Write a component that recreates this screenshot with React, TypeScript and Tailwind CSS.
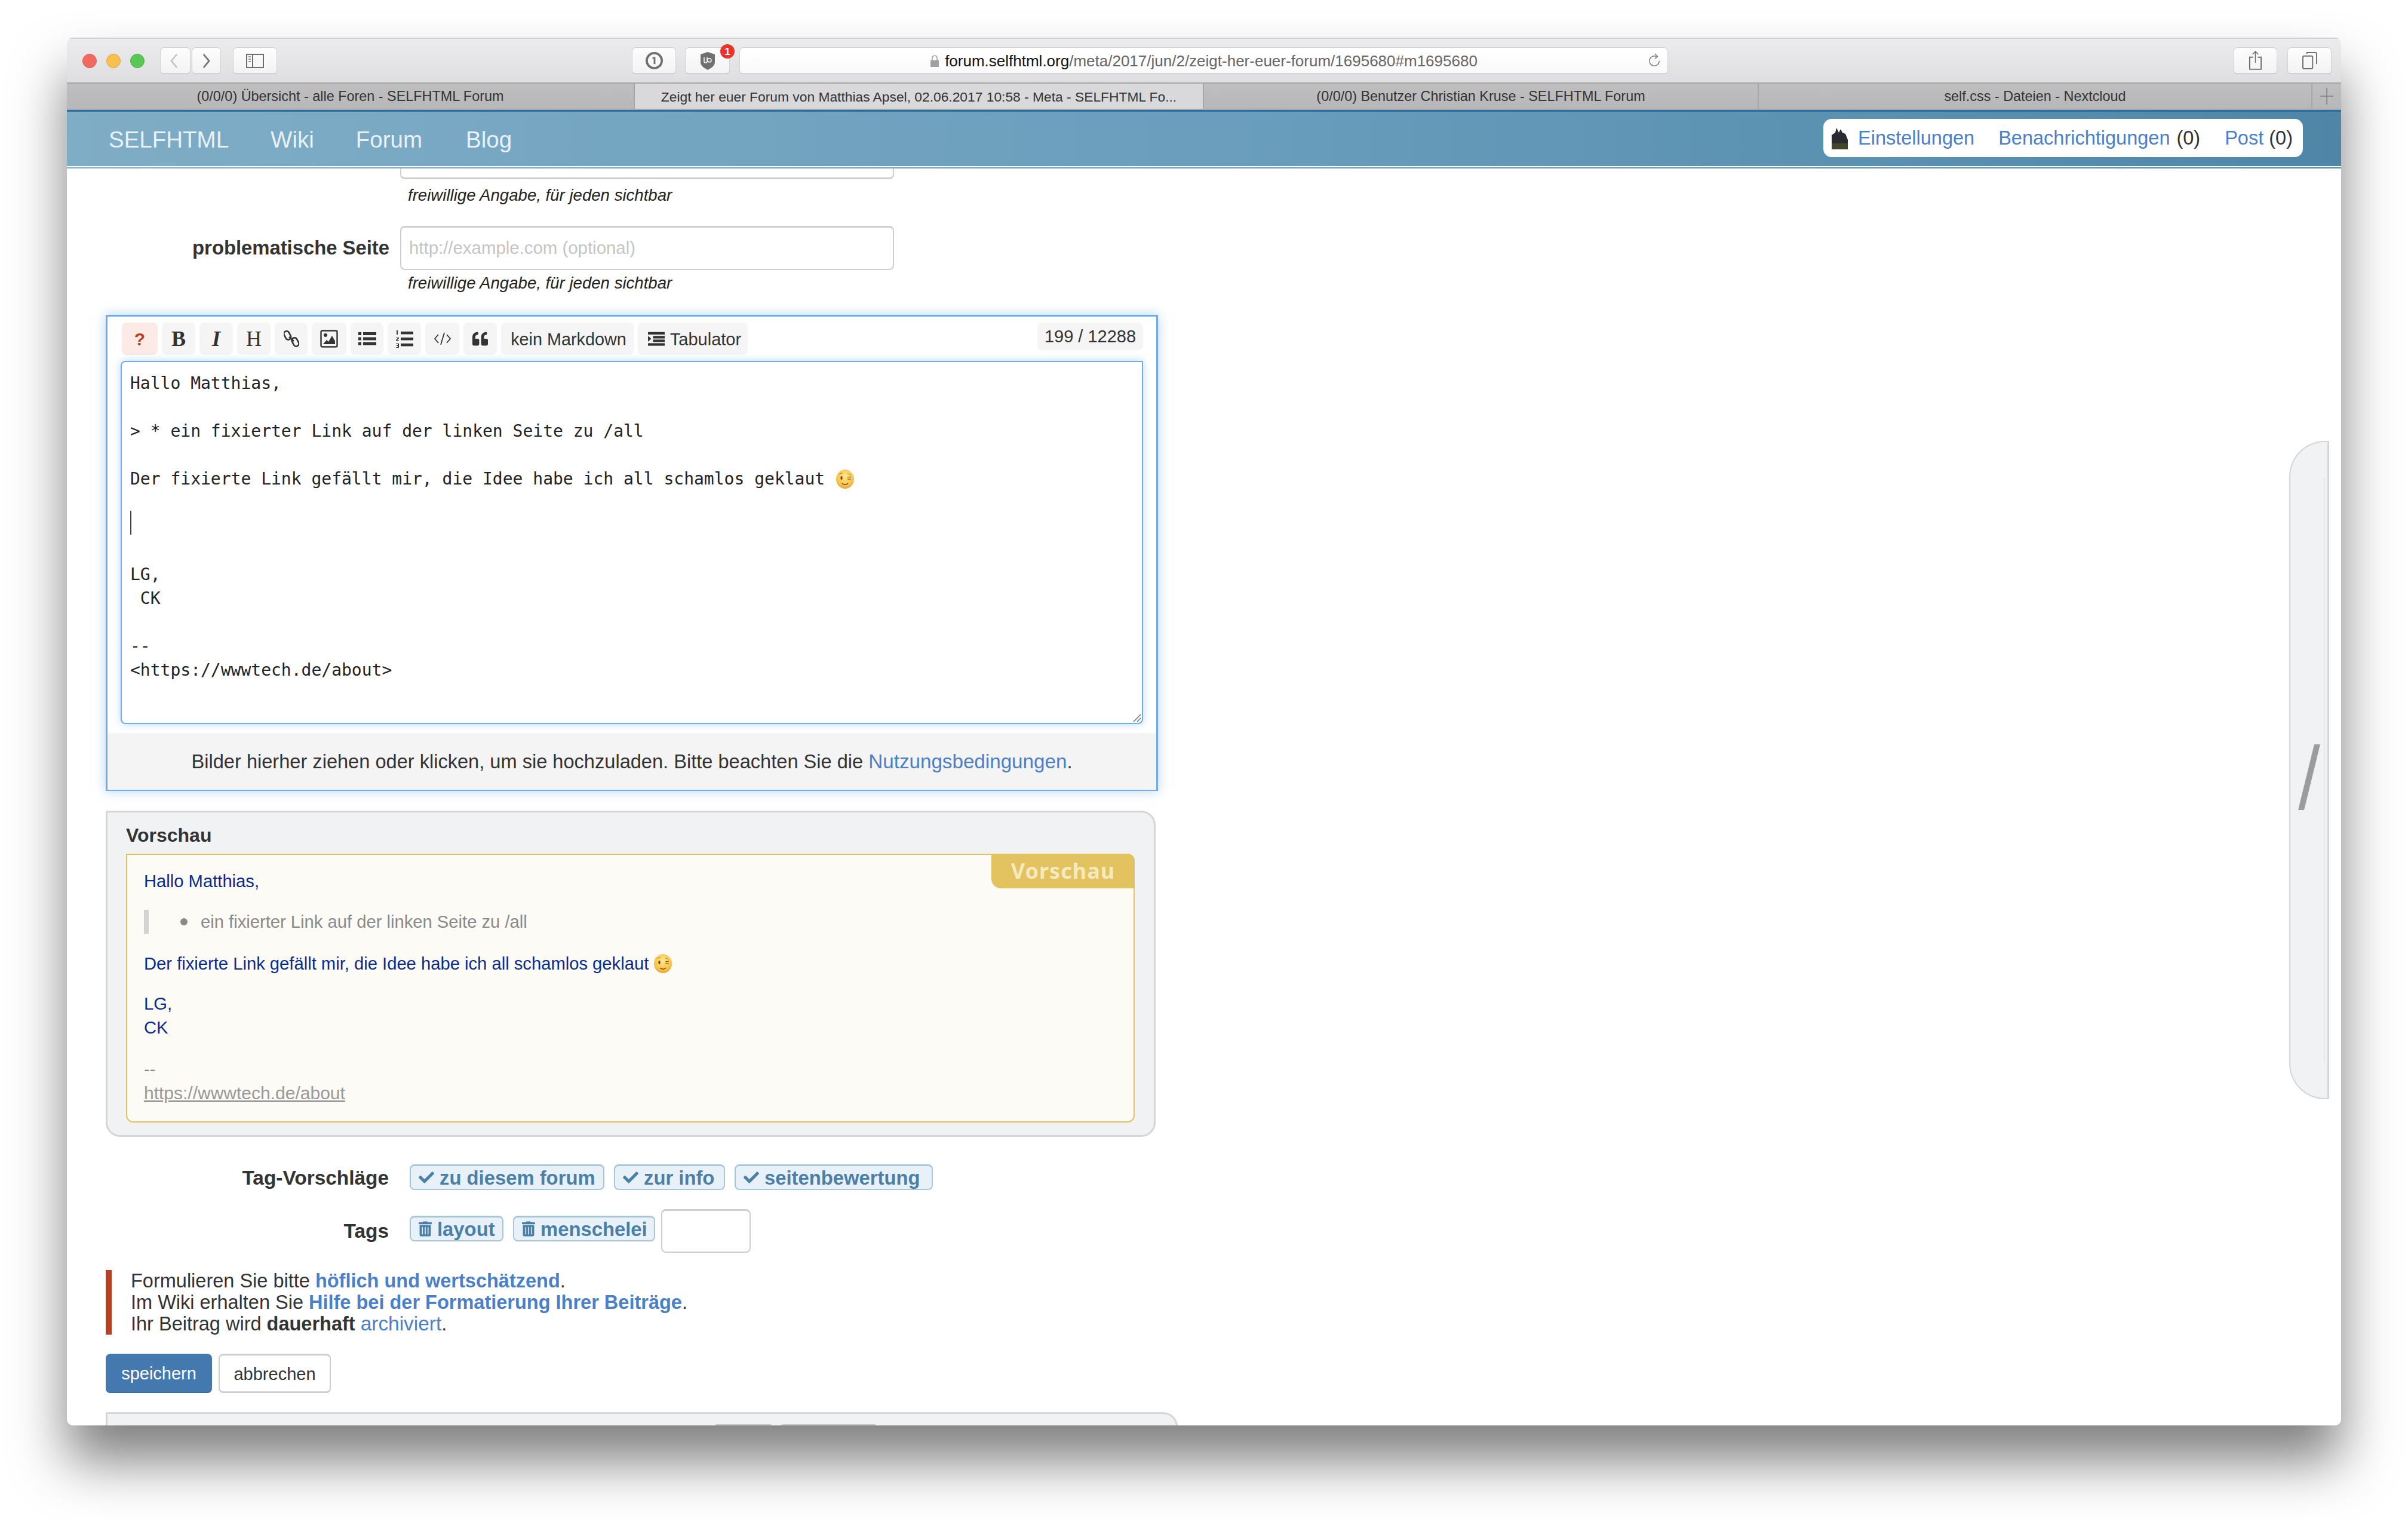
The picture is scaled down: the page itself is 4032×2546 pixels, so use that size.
import { FaCheck, FaQuoteLeft, FaTrashAlt } from "react-icons/fa";

const tabs = [
  { title: "(0/0/0) Übersicht - alle Foren - SELFHTML Forum", width: "w-[951px]", active: false },
  { title: "Zeigt her euer Forum von Matthias Apsel, 02.06.2017 10:58 - Meta - SELFHTML Fo...", width: "w-[953px]", active: true },
  { title: "(0/0/0) Benutzer Christian Kruse - SELFHTML Forum", width: "w-[929px]", active: false },
  { title: "self.css - Dateien - Nextcloud", width: "w-[927px]", active: false },
];

const editorLines = [
  "Hallo Matthias,",
  "",
  "> * ein fixierter Link auf der linken Seite zu /all",
  "",
  "Der fixierte Link gefällt mir, die Idee habe ich all schamlos geklaut",
  "",
  "|",
  "",
  "LG,",
  " CK",
  "",
  "-- ",
  "<https://wwwtech.de/about>",
];

const Wink = ({ className }: { className: string }) => (
  <svg viewBox="0 0 32 32" className={className}>
    <defs>
      <radialGradient id="face" cx="50%" cy="35%" r="70%">
        <stop offset="0%" stopColor="#ffe88a" />
        <stop offset="70%" stopColor="#f9c14a" />
        <stop offset="100%" stopColor="#e39a2a" />
      </radialGradient>
    </defs>
    <ellipse cx="16" cy="16" rx="15" ry="16" fill="url(#face)" />
    <ellipse cx="10" cy="14" rx="1.6" ry="3" fill="#6b4216" />
    <path d="M20 13l6-1M20 16l6 0" stroke="#6b4216" strokeWidth="1.2" fill="none" />
    <path d="M6 8c2-2 4-2 6-2M20 7c2 0 4 1 5 2" stroke="#b8762a" strokeWidth="1" fill="none" />
    <path d="M11 23c3 3 7 3 10 0" stroke="#6b4216" strokeWidth="1.4" fill="none" />
  </svg>
);

const SafariButton = ({ className, children }: { className: string; children?: React.ReactNode }) => (
  <div className={`flex items-center justify-center h-[45px] bg-gradient-to-b from-[#fdfdfd] to-[#f3f3f3] border border-[#d2d2d2] border-b-[#b4b4b4] rounded-[7px] ${className}`}>
    {children}
  </div>
);

const ToolButton = ({ className, children }: { className: string; children: React.ReactNode }) => (
  <div className={`flex items-center justify-center h-[54px] bg-[#f5f5f5] rounded-[8px] text-[#333] ${className}`}>{children}</div>
);

const Tag = ({ width, icon, label }: { width: string; icon: React.ReactNode; label: string }) => (
  <span className={`inline-flex items-center gap-[9px] h-[43px] pl-[13px] bg-[#e8f1f7] border-2 border-t-[3px] border-[#a8c6da] rounded-[8px] text-[#4a80a8] font-bold text-[32.8px] leading-none whitespace-nowrap ${width}`}>
    {icon}
    <span className="pt-[2px]">{label}</span>
  </span>
);

export default function App() {
  return (
    <div className="w-[4032px] h-[2546px] bg-white pt-[63px] pl-[112px] font-['Liberation_Sans',Arial,sans-serif] text-[#333]">
      <div className="flex flex-col w-[3808px] h-[2323px] overflow-hidden bg-white rounded-[10px] shadow-[0_60px_90px_rgba(0,0,0,0.5)]">
        {/* Browser toolbar */}
        <div className="flex items-center shrink-0 h-[75px] pl-[26px] pr-[16px] bg-gradient-to-b from-[#ececee] to-[#dedee1] border-t-2 border-[#cfcfcf]">
          <div className="flex gap-[16px]">
            <span className="w-[24px] h-[24px] rounded-full bg-[#f2695f] border border-[#dd5b50]" />
            <span className="w-[24px] h-[24px] rounded-full bg-[#f8c04e] border border-[#dea83c]" />
            <span className="w-[24px] h-[24px] rounded-full bg-[#5ac854] border border-[#4cae47]" />
          </div>
          <SafariButton className="w-[51px] ml-[26px]">
            <svg viewBox="0 0 16 28" className="w-[15px] h-[26px] mr-[4px]"><path d="M13 2L3 14l10 12" stroke="#c8c8c8" strokeWidth="3" fill="none" /></svg>
          </SafariButton>
          <SafariButton className="w-[49px] ml-[2px]">
            <svg viewBox="0 0 16 28" className="w-[15px] h-[26px]"><path d="M3 2l10 12L3 26" stroke="#777" strokeWidth="3" fill="none" /></svg>
          </SafariButton>
          <SafariButton className="w-[74px] ml-[20px]">
            <svg viewBox="0 0 30 24" className="w-[30px] h-[24px]">
              <rect x="1" y="1" width="28" height="22" fill="none" stroke="#6f6f6f" strokeWidth="2" />
              <path d="M11 1v22" stroke="#6f6f6f" strokeWidth="2" />
              <path d="M4 5h4M4 9h4M4 13h4" stroke="#9a9a9a" strokeWidth="2" />
            </svg>
          </SafariButton>
          <SafariButton className="w-[74px] ml-[594px]">
            <svg viewBox="0 0 32 32" className="w-[31px] h-[31px]">
              <circle cx="16" cy="16" r="13" fill="none" stroke="#707070" strokeWidth="4" />
              <path d="M13 10h5v12h-3V13h-2z" fill="#707070" />
            </svg>
          </SafariButton>
          <div className="relative ml-[15px]">
            <SafariButton className="w-[75px]">
              <svg viewBox="0 0 28 32" className="w-[28px] h-[32px]">
                <path d="M14 1l12 4v13c0 6-6 10-12 13C8 28 2 24 2 18V5z" fill="#707070" />
                <path d="M8 10v7c0 3 5 3 5 0v-7M14 14c0-3 6-3 6 1s-6 4-6 0" stroke="#fff" strokeWidth="1.5" fill="none" />
              </svg>
            </SafariButton>
            <span className="absolute -top-[5px] right-[-8px] flex items-center justify-center w-[24px] h-[24px] rounded-full bg-[#e8352b] text-white text-[17px] font-bold leading-none">1</span>
          </div>
          <div className="relative flex items-center justify-center w-[1555px] h-[45px] ml-[16px] bg-gradient-to-b from-[#ffffff] to-[#fafafa] border border-[#d2d2d2] border-b-[#b4b4b4] rounded-[7px] text-[26px]">
            <svg viewBox="0 0 16 22" className="w-[16px] h-[22px] mr-[9px]">
              <path d="M4 10V6c0-5 8-5 8 0v4" stroke="#a0a0a0" strokeWidth="1.6" fill="none" />
              <rect x="1" y="10" width="14" height="11" fill="#a0a0a0" />
            </svg>
            <span className="pt-[2px] text-[#111]">forum.selfhtml.org</span>
            <span className="pt-[2px] text-[#666]">/meta/2017/jun/2/zeigt-her-euer-forum/1695680#m1695680</span>
            <svg viewBox="0 0 24 26" className="absolute right-[11px] top-[9px] w-[22px] h-[24px]">
              <path d="M16 6A9 9 0 1 0 21 14" stroke="#777" strokeWidth="1.6" fill="none" />
              <path d="M13 1l5 5-5 4" stroke="#777" strokeWidth="1.6" fill="none" />
            </svg>
          </div>
          <SafariButton className="w-[73px] ml-[947px]">
            <svg viewBox="0 0 24 34" className="w-[23px] h-[33px]">
              <path d="M12 1v20M7 6l5-5 5 5" stroke="#6f6f6f" strokeWidth="1.6" fill="none" />
              <path d="M8 11H2v21h20V11h-6" stroke="#6f6f6f" strokeWidth="2" fill="none" />
            </svg>
          </SafariButton>
          <SafariButton className="w-[74px] ml-[17px]">
            <svg viewBox="0 0 26 30" className="w-[25px] h-[29px]">
              <rect x="1" y="7" width="17" height="22" rx="2" fill="none" stroke="#6f6f6f" strokeWidth="2" />
              <path d="M8 3V1h15c1 0 2 1 2 2v18" stroke="#6f6f6f" strokeWidth="2" fill="none" />
            </svg>
          </SafariButton>
        </div>

        {/* Tab bar */}
        <div className="flex shrink-0 h-[46px] border-t-2 border-b-2 border-[#a7a7a8] bg-gradient-to-b from-[#bfbfc0] to-[#b7b7b9]">
          {tabs.map((tab) => (
            <div
              key={tab.title}
              className={`flex items-center justify-center pt-[2px] border-r-2 border-[#a7a7a8] text-[#333] ${tab.width} ${tab.active ? "bg-[#d9d9db] text-[22.8px]" : "text-[23.4px]"}`}
            >
              {tab.title}
            </div>
          ))}
          <div className="flex flex-1 items-center justify-center">
            <svg viewBox="0 0 24 30" className="w-[24px] h-[30px]"><path d="M12 1v28M1 15h22" stroke="#7f7f7f" strokeWidth="1.5" /></svg>
          </div>
        </div>

        {/* Site nav */}
        <div className="shrink-0 border-t-[3px] border-[#2e6da0] h-[98px] bg-gradient-to-r from-[#7fadc6] via-[#6a9ebc] to-[#4f86a8]">
          <div className="flex items-center h-[91px] pl-[70px] pr-[64px] text-[38.5px] text-[#e8f1f6]">
            <span className="mt-[3px]">SELFHTML</span>
            <span className="ml-[70px] mt-[3px]">Wiki</span>
            <span className="ml-[70px] mt-[3px]">Forum</span>
            <span className="ml-[73px] mt-[3px]">Blog</span>
            <div className="flex items-center ml-auto mb-[3px] w-[803px] h-[64px] pl-[14px] bg-white rounded-[14px] text-[32.5px] text-[#333]">
              <svg viewBox="0 0 27 38" className="w-[27px] h-[38px]">
                <path d="M0 38V14L6 10 8 2l4 8 3-6 3 6 5 2 4 10v16z" fill="#2a2a33" />
                <rect x="0" y="28" width="27" height="10" fill="#46442f" />
              </svg>
              <span className="ml-[17px] text-[#4a80c8]">Einstellungen</span>
              <span className="ml-[40px] text-[#4a80c8]">Benachrichtigungen</span>
              <span className="ml-[11px]">(0)</span>
              <span className="ml-[41px] text-[#4a80c8]">Post</span>
              <span className="ml-[9px]">(0)</span>
            </div>
          </div>
          <div className="h-[2px] bg-white" />
        </div>

        {/* Page */}
        <div className="relative flex-1 min-h-0 overflow-hidden pl-[65px]">
          <div className="ml-[493px] w-[827px] h-[18px] border-2 border-t-0 border-b-[3px] border-[#cdcdcd] rounded-b-[8px]" />
          <p className="ml-[506px] mt-[9px] text-[27.6px] leading-[36px] italic text-[#222]">freiwillige Angabe, für jeden sichtbar</p>

          <div className="flex items-center mt-[33px]">
            <label className="w-[493px] pr-[18px] text-right text-[32.8px] font-bold">problematische Seite</label>
            <div className="flex items-center w-[827px] h-[74px] pl-[13px] border-2 border-t-[3px] border-[#cdcdcd] rounded-[8px] text-[29.4px] text-[#c4c4c4]">
              http://example.com (optional)
            </div>
          </div>
          <p className="ml-[506px] mt-[4px] text-[27.6px] leading-[36px] italic text-[#222]">freiwillige Angabe, für jeden sichtbar</p>

          {/* Editor */}
          <div className="w-[1762px] h-[797px] mt-[35px] border-[3px] border-[#6fadea] shadow-[0_0_18px_rgba(111,173,234,0.5)]">
            <div className="flex gap-[7px] h-[54px] mt-[10px] pl-[24px] pr-[22px]">
              <ToolButton className="w-[60px] !bg-[#fbeae6] !text-[#b8401f] font-bold text-[30px]">?</ToolButton>
              <ToolButton className="w-[56px] font-['Liberation_Serif',serif] font-bold text-[36px]">B</ToolButton>
              <ToolButton className="w-[56px] font-['Liberation_Serif',serif] italic font-bold text-[36px]">I</ToolButton>
              <ToolButton className="w-[56px] font-['Liberation_Serif',serif] text-[36px]">H</ToolButton>
              <ToolButton className="w-[55px]">
                <svg viewBox="0 0 26 32" className="w-[26px] h-[32px]">
                  <g fill="none" stroke="#333" strokeWidth="2.6">
                    <rect x="1.5" y="3" width="9" height="15" rx="4.5" transform="rotate(-28 6 10)" />
                    <rect x="15" y="14" width="9" height="15" rx="4.5" transform="rotate(-28 19.5 21.5)" />
                  </g>
                  <path d="M9 13l8 7" stroke="#333" strokeWidth="2.6" />
                </svg>
              </ToolButton>
              <ToolButton className="w-[58px]">
                <svg viewBox="0 0 30 30" className="w-[30px] h-[30px]">
                  <rect x="1.5" y="1.5" width="27" height="27" rx="2" fill="none" stroke="#333" strokeWidth="2.4" />
                  <circle cx="9" cy="9" r="3" fill="#333" />
                  <path d="M5 24l6-7 3 3 6-10 5 9v5z" fill="#333" />
                </svg>
              </ToolButton>
              <ToolButton className="w-[55px]">
                <svg viewBox="0 0 30 24" className="w-[30px] h-[24px]" fill="#333">
                  <rect x="0" y="1" width="5" height="5" /><rect x="8" y="1" width="22" height="5" />
                  <rect x="0" y="9.5" width="5" height="5" /><rect x="8" y="9.5" width="22" height="5" />
                  <rect x="0" y="18" width="5" height="5" /><rect x="8" y="18" width="22" height="5" />
                </svg>
              </ToolButton>
              <ToolButton className="w-[56px]">
                <svg viewBox="0 0 30 30" className="w-[30px] h-[30px]" fill="#333">
                  <rect x="9" y="3" width="21" height="4.5" /><rect x="9" y="13" width="21" height="4.5" /><rect x="9" y="23" width="21" height="4.5" />
                  <path d="M2 1h2v7H2zM1 13h5v1.5l-3 3h3v1H1v-1.5l3-3H1zM1 23h5v7H1v-1h3v-2H2v-1h2v-2H1z" />
                </svg>
              </ToolButton>
              <ToolButton className="w-[57px]">
                <svg viewBox="0 0 30 24" className="w-[30px] h-[24px]">
                  <path d="M8 5l-6 7 6 7M22 5l6 7-6 7M18 2l-6 20" stroke="#333" strokeWidth="1.8" fill="none" />
                </svg>
              </ToolButton>
              <ToolButton className="w-[56px]"><FaQuoteLeft className="w-[28px] h-[26px]" /></ToolButton>
              <ToolButton className="w-[222px] pt-[3px] pl-[4px] text-[28.8px]">kein Markdown</ToolButton>
              <ToolButton className="w-[184px] text-[29px] gap-[9px] pl-[6px]">
                <svg viewBox="0 0 30 26" className="w-[28px] h-[26px]" fill="#333">
                  <rect x="0" y="1" width="30" height="4.5" /><rect x="9" y="8" width="21" height="4.5" /><rect x="9" y="14.5" width="21" height="4.5" /><rect x="0" y="21" width="30" height="4.5" />
                  <path d="M0 8l6 5-6 5z" />
                </svg>
                <span className="pt-[3px]">Tabulator</span>
              </ToolButton>
              <div className="flex items-center justify-center self-start ml-auto w-[177px] h-[46px] pt-[2px] bg-[#f5f5f5] rounded-[8px] text-[29px]">199 / 12288</div>
            </div>

            <div className="relative w-[1712px] h-[608px] mt-[10px] ml-[22px] pt-[16px] pl-[14px] border-2 border-[#6fadea] rounded-[8px] rounded-tr-none shadow-[0_0_14px_rgba(111,173,234,0.45)] font-['DejaVu_Sans_Mono','Liberation_Mono',monospace] text-[28px] leading-[40px] text-[#222] whitespace-pre">
              {editorLines.map((line, i) => (
                <div key={i} className="flex items-center h-[40px]">
                  {line === "|" ? <span className="w-[2px] h-[40px] -mt-[14px] bg-[#444]" /> : line}
                  {i === 4 && <Wink className="w-[32px] h-[32px] ml-[18px]" />}
                </div>
              ))}
              <svg viewBox="0 0 14 14" className="absolute right-[1px] bottom-[1px] w-[14px] h-[14px]">
                <path d="M1 13L13 1M7 13l6-6" stroke="#666" strokeWidth="1.4" />
              </svg>
            </div>

            <div className="flex items-center justify-center h-[95px] mt-[15px] bg-[#f4f4f4] text-[32.6px]">
              <span>
                Bilder hierher ziehen oder klicken, um sie hochzuladen. Bitte beachten Sie die{" "}
                <span className="text-[33.2px] text-[#4a80c8]">Nutzungsbedingungen</span>.
              </span>
            </div>
          </div>

          {/* Preview */}
          <div className="w-[1758px] h-[546px] mt-[33px] pl-[31px] pr-[32px] pt-[20px] bg-[#f1f2f4] border-[3px] border-[#d5d5d5] rounded-[24px] rounded-tl-[2px]">
            <h3 className="text-[32px] leading-[36px] font-bold">Vorschau</h3>
            <div className="relative h-[450px] mt-[13px] pl-[28px] pt-[24px] bg-[#fcfbf5] border-2 border-[#e3c15d] rounded-[12px] rounded-tl-none text-[29.2px] leading-[40px] text-[#0a2c8f]">
              <div className="absolute -top-[2px] -right-[2px] flex items-center justify-center w-[240px] h-[58px] bg-[#e3c35f] rounded-tr-[12px] rounded-bl-[16px] font-['Noto_Sans',sans-serif] font-bold text-[36px] tracking-[1px] text-[#f6e9bd]">
                Vorschau
              </div>
              <p>Hallo Matthias,</p>
              <div className="flex items-center h-[40px] mt-[28px] border-l-[8px] border-[#d2d2d2] text-[#8a8a8a]">
                <span className="w-[12px] h-[12px] ml-[53px] rounded-full bg-[#8a8a8a]" />
                <span className="ml-[22px]">ein fixierter Link auf der linken Seite zu /all</span>
              </div>
              <p className="flex items-center mt-[30px]">
                Der fixierte Link gefällt mir, die Idee habe ich all schamlos geklaut
                <Wink className="w-[32px] h-[32px] ml-[8px]" />
              </p>
              <p className="mt-[27px]">LG,</p>
              <p>CK</p>
              <p className="mt-[30px] text-[#8a8a8a]">--</p>
              <p className="text-[30px] text-[#999] underline">https://wwwtech.de/about</p>
            </div>
          </div>

          {/* Tags */}
          <div className="flex items-center h-[43px] mt-[46px]">
            <label className="w-[474px] pt-[3px] text-right text-[33.4px] font-bold">Tag-Vorschläge</label>
            <div className="flex gap-[16px] ml-[35px]">
              <Tag width="w-[326px]" icon={<FaCheck className="w-[26px] h-[28px]" />} label="zu diesem forum" />
              <Tag width="w-[186px]" icon={<FaCheck className="w-[26px] h-[28px]" />} label="zur info" />
              <Tag width="w-[332px]" icon={<FaCheck className="w-[26px] h-[28px]" />} label="seitenbewertung" />
            </div>
          </div>
          <div className="flex items-center h-[73px] mt-[32px]">
            <label className="w-[474px] mt-[2px] text-right text-[33.4px] font-bold">Tags</label>
            <div className="flex items-start gap-[16px] h-[73px] pt-[11px] ml-[35px]">
              <Tag width="w-[157px]" icon={<FaTrashAlt className="w-[22px] h-[28px]" />} label="layout" />
              <Tag width="w-[238px]" icon={<FaTrashAlt className="w-[22px] h-[28px]" />} label="menschelei" />
            </div>
            <div className="w-[150px] h-[73px] ml-[10px] border-2 border-t-[3px] border-[#cdcdcd] rounded-[8px]" />
          </div>

          {/* Notice */}
          <div className="h-[108px] mt-[29px] pl-[32px] border-l-[10px] border-[#b8401f] text-[32.5px] leading-[36px]">
            <p>Formulieren Sie bitte <b className="text-[#4a80c8]">höflich und wertschätzend</b>.</p>
            <p>Im Wiki erhalten Sie <b className="text-[#4a80c8]">Hilfe bei der Formatierung Ihrer Beiträge</b>.</p>
            <p>Ihr Beitrag wird <b>dauerhaft</b> <span className="text-[33.4px] text-[#4a80c8]">archiviert</span>.</p>
          </div>

          <div className="flex gap-[11px] mt-[32px]">
            <button className="w-[178px] h-[66px] pt-[3px] bg-[#4479b0] border-b-2 border-[#3a6ba0] rounded-[8px] text-[29px] text-white">speichern</button>
            <button className="w-[188px] h-[66px] pt-[3px] bg-white border-2 border-t-[3px] border-b-[3px] border-[#cdcdcd] rounded-[8px] text-[29px]">abbrechen</button>
          </div>

          {/* Next box, cut off by the window */}
          <div className="flex w-[1795px] h-[60px] mt-[32px] pt-[17px] bg-[#f1f2f4] border-[3px] border-[#d5d5d5] rounded-t-[24px] rounded-tl-[2px]">
            <span className="w-[97px] h-[20px] ml-[1016px] bg-[#c8c8c8] rounded-t-[4px]" />
            <span className="w-[161px] h-[20px] ml-[14px] bg-[#c8c8c8] rounded-t-[4px]" />
          </div>

          {/* Sidebar handle */}
          <div className="absolute top-[456px] right-[20px] w-[67px] h-[1102px] bg-[#f1f2f4] border-2 border-r-[3px] border-[#d5d5d5] rounded-l-[60px_60px]">
            <svg viewBox="0 0 37 110" className="absolute left-[13px] top-[506px] w-[37px] h-[110px]">
              <path d="M27 0h10L10 110H0z" fill="#9c9c9c" />
            </svg>
            <span className="absolute right-[4px] top-[58px] w-px h-[982px] bg-[#e2e2e4]" />
          </div>
        </div>
      </div>
    </div>
  );
}
